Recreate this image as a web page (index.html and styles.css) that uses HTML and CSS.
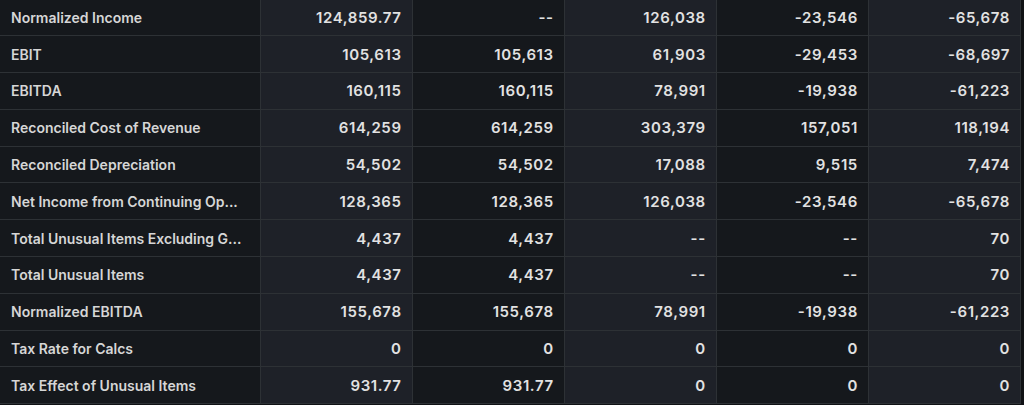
FILE: index.html
```html
<!DOCTYPE html>
<html>
<head>
<meta charset="utf-8">
<link rel="stylesheet" href="styles.css">
</head>
<body>
<div class="wrap">
<table class="fin">
<tbody>
<tr><td class="lbl">Normalized Income</td><td>124,859.77</td><td>--</td><td>126,038</td><td>-23,546</td><td>-65,678</td></tr>
<tr><td class="lbl">EBIT</td><td>105,613</td><td>105,613</td><td>61,903</td><td>-29,453</td><td>-68,697</td></tr>
<tr><td class="lbl">EBITDA</td><td>160,115</td><td>160,115</td><td>78,991</td><td>-19,938</td><td>-61,223</td></tr>
<tr><td class="lbl">Reconciled Cost of Revenue</td><td>614,259</td><td>614,259</td><td>303,379</td><td>157,051</td><td>118,194</td></tr>
<tr><td class="lbl">Reconciled Depreciation</td><td>54,502</td><td>54,502</td><td>17,088</td><td>9,515</td><td>7,474</td></tr>
<tr><td class="lbl">Net Income from Continuing Op...</td><td>128,365</td><td>128,365</td><td>126,038</td><td>-23,546</td><td>-65,678</td></tr>
<tr><td class="lbl">Total Unusual Items Excluding G...</td><td>4,437</td><td>4,437</td><td>--</td><td>--</td><td>70</td></tr>
<tr><td class="lbl">Total Unusual Items</td><td>4,437</td><td>4,437</td><td>--</td><td>--</td><td>70</td></tr>
<tr><td class="lbl">Normalized EBITDA</td><td>155,678</td><td>155,678</td><td>78,991</td><td>-19,938</td><td>-61,223</td></tr>
<tr><td class="lbl">Tax Rate for Calcs</td><td>0</td><td>0</td><td>0</td><td>0</td><td>0</td></tr>
<tr><td class="lbl">Tax Effect of Unusual Items</td><td>931.77</td><td>931.77</td><td>0</td><td>0</td><td>0</td></tr>
</tbody>
</table>
</div>
</body>
</html>
```

FILE: styles.css
```css
html, body {
  margin: 0;
  padding: 0;
  background: #101215;
}
.wrap {
  width: 1021px;
  overflow: hidden;
  margin-top: -1px;
}
.fin {
  border-collapse: collapse;
  table-layout: fixed;
  width: 1021px;
  font-family: Inter, "Noto Sans", sans-serif;
  font-size: 15px;
  font-weight: 600;
  letter-spacing: 0.6px;
  color: #e2e2e2;
}
.fin td {
  height: 36.8px;
  box-sizing: border-box;
  padding: 0 10px 0 11px;
  border: 1px solid #2d3135;
  border-top: none;
  text-align: right;
  background: #1e2128;
  white-space: nowrap;
  overflow: hidden;
}
.fin td:first-child {
  border-left: none;
  width: 260px;
}
.fin td:nth-child(odd) {
  background: #15181c;
}
.fin td.lbl {
  text-align: left;
  font-size: 14px;
  letter-spacing: 0;
  color: #d6d6d6;
}
```
